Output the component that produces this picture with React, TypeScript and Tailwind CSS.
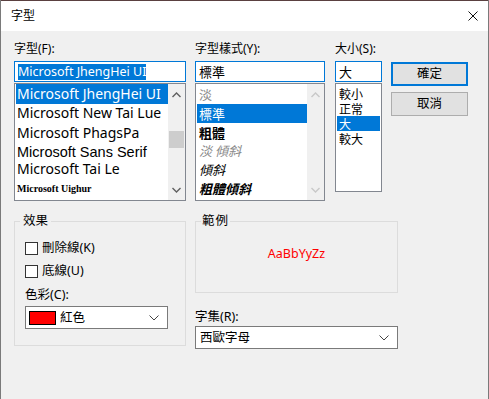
import { Fragment } from 'react';

const ui = "font-['Noto_Sans','Noto_Sans_CJK_TC',sans-serif]";

const fonts = [
  { name: 'Microsoft JhengHei UI', h: 'h-[20px]', cls: "text-[14px] font-['Noto_Sans','Noto_Sans_CJK_TC',sans-serif]", sel: true },
  { name: 'Microsoft New Tai Lue', h: 'h-[17px]', cls: "text-[14px] font-['Noto_Sans',sans-serif]" },
  { name: 'Microsoft PhagsPa', h: 'h-[23px]', cls: "text-[14px] font-['Noto_Sans',sans-serif]" },
  { name: 'Microsoft Sans Serif', h: 'h-[16px]', cls: "text-[14.5px] font-['Liberation_Sans',sans-serif]" },
  { name: 'Microsoft Tai Le', h: 'h-[18px]', cls: "text-[14px] font-['Noto_Sans',sans-serif]" },
  { name: 'Microsoft Uighur', h: 'h-[22px]', cls: "text-[10px] font-semibold font-['Liberation_Serif',serif]" },
];

const styles = [
  { name: '淡', h: 'h-[20px]', cls: 'text-[#8a8a8a]' },
  { name: '標準', h: 'h-[19px]', cls: '', sel: true },
  { name: '粗體', h: 'h-[19px]', cls: 'font-bold' },
  { name: '淡 傾斜', h: 'h-[18px]', cls: 'italic text-[#8a8a8a]' },
  { name: '傾斜', h: 'h-[19px]', cls: 'italic' },
  { name: '粗體傾斜', h: 'h-[19px]', cls: 'italic font-bold' },
];

const sizes = ['較小', '正常', '大', '較大'];

function Chevron({ up, color }: { up?: boolean; color: string }) {
  return (
    <svg width="9" height="6" viewBox="0 0 9 6">
      <path d={up ? 'M0.5 5 L4.5 1 L8.5 5' : 'M0.5 1 L4.5 5 L8.5 1'} fill="none" stroke={color} strokeWidth="1.4" />
    </svg>
  );
}

function Scrollbar({ thumb, color }: { thumb?: boolean; color: string }) {
  return (
    <div className="w-[17px] bg-[#f0f0f0] flex flex-col items-center">
      <div className="h-[18px] flex items-center justify-center mt-[2px]"><Chevron up color={color} /></div>
      {thumb ? <div className="w-[15px] h-[17px] bg-[#cdcdcd] mt-[27px]" /> : null}
      <div className="flex-1" />
      <div className="h-[18px] flex items-center justify-center mb-[1px]"><Chevron color={color} /></div>
    </div>
  );
}

function Dropdown({ children, w }: { children: React.ReactNode; w: string }) {
  return (
    <div className={`${w} h-[23px] bg-white border border-[#7a7a7a] flex items-center pr-[8px]`}>
      <div className="flex-1 flex items-center">{children}</div>
      <svg width="10" height="6" viewBox="0 0 10 6">
        <path d="M0.5 0.5 L5 5 L9.5 0.5" fill="none" stroke="#444" strokeWidth="1" />
      </svg>
    </div>
  );
}

export default function App() {
  return (
    <div className={`w-[489px] h-[399px] bg-[#f0f0f0] border-l border-r border-[#7a7a7a] text-[12px] leading-[16px] text-black ${ui}`}>
      <div className="h-[31px] bg-white flex items-center justify-between pl-[10px] pr-[10px] border-t border-[#5a4040]">
        <span className="text-[12px]">字型</span>
        <svg width="10" height="10" viewBox="0 0 10 10">
          <path d="M0.5 0.5 L9.5 9.5 M9.5 0.5 L0.5 9.5" stroke="#111" strokeWidth="1" />
        </svg>
      </div>

      <div className="pl-[13px] pt-[10px]">
        <div className="flex">
          {/* font family */}
          <div className="w-[172px]">
            <div className="h-[16px]">字型(F):</div>
            <div className="mt-[4px] h-[21px] bg-white border border-[#0078d7] flex items-center pl-[3px]">
              <span className="bg-[#0078d7] text-white text-[12.5px] leading-[16px] font-['Noto_Sans',sans-serif]">Microsoft JhengHei UI</span>
            </div>
            <div className="mt-[1px] h-[118px] bg-white border border-[#828790] flex">
              <div className="flex-1 pl-[1px] overflow-hidden">
                {fonts.map(f => (
                  <div key={f.name} className={`${f.h} flex items-center pl-[1px] whitespace-nowrap ${f.cls} ${f.sel ? 'bg-[#0078d7] text-white' : ''}`}>{f.name}</div>
                ))}
              </div>
              <Scrollbar thumb color="#606060" />
            </div>
          </div>

          {/* style */}
          <div className="w-[130px] ml-[9px]">
            <div className="h-[16px]">字型樣式(Y):</div>
            <div className="mt-[4px] h-[21px] bg-white border border-[#0078d7] flex items-center pl-[3px] text-[13px]">標準</div>
            <div className="mt-[1px] h-[118px] bg-white border border-[#828790] flex">
              <div className="flex-1 pl-[1px] text-[13px] font-['Noto_Sans_CJK_TC',sans-serif]">
                {styles.map(s => (
                  <div key={s.name} className={`${s.h} flex items-center pl-[2px] ${s.cls} ${s.sel ? 'bg-[#0078d7] text-white' : ''}`}>{s.name}</div>
                ))}
              </div>
              <Scrollbar color="#c8c8c8" />
            </div>
          </div>

          {/* size */}
          <div className="w-[47px] ml-[10px]">
            <div className="h-[16px]">大小(S):</div>
            <div className="mt-[4px] h-[21px] bg-white border border-[#0078d7] flex items-center pl-[3px] text-[13px]">大</div>
            <div className="mt-[1px] h-[109px] bg-white border border-[#828790] pt-[2px] px-[1px] text-[12px] leading-[15px] font-['Noto_Sans_CJK_TC',sans-serif]">
              {sizes.map(s => (
                <div key={s} className={`h-[15px] flex items-center pl-[2px] ${s === '大' ? 'bg-[#0078d7] text-white' : ''}`}>
                  <span className="leading-[12px]">{s}</span>
                </div>
              ))}
            </div>
          </div>

          {/* buttons */}
          <div className="ml-[9px] mt-[21px] flex flex-col gap-[6px]">
            <button className="w-[77px] h-[24px] bg-[#e1e1e1] border-2 border-[#0078d7] text-[12.5px] flex items-center justify-center">確定</button>
            <button className="w-[77px] h-[24px] bg-[#e1e1e1] border border-[#adadad] text-[12.5px] flex items-center justify-center">取消</button>
          </div>
        </div>

        <div className="flex mt-[12px]">
          <fieldset className="w-[172px] h-[133px] border border-[#dcdcdc]">
            <legend className="ml-[5px] px-[3px] text-[12.5px]">效果</legend>
            <div className="mt-[12px] pl-[10px] flex flex-col">
              {['刪除線(K)', '底線(U)'].map((t, i) => (
                <Fragment key={t}>
                  <div className={`flex items-center h-[14px] ${i ? 'mt-[9px]' : ''}`}>
                    <div className="w-[13px] h-[13px] bg-white border border-[#333]" />
                    <span className="ml-[4px] text-[12.5px]">{t}</span>
                  </div>
                </Fragment>
              ))}
              <div className="mt-[9px] h-[16px] text-[12.5px]">色彩(C):</div>
              <div className="mt-[3px]">
                <Dropdown w="w-[143px]">
                  <div className="ml-[3px] w-[27px] h-[14px] bg-[#ff0000] border border-black" />
                  <span className="ml-[4px] text-[12.5px]">紅色</span>
                </Dropdown>
              </div>
            </div>
          </fieldset>

          <div className="ml-[9px] w-[203px]">
            <fieldset className="h-[80px] border border-[#dcdcdc] flex items-center justify-center">
              <legend className="ml-[5px] px-[1px] text-[12.5px] tracking-[1px]">範例</legend>
              <span className="text-[#ff0000] text-[12.5px] font-['Noto_Sans',sans-serif] -mt-[14px]">AaBbYyZz</span>
            </fieldset>
            <div className="mt-[16px] h-[16px] text-[12.5px]">字集(R):</div>
            <div className="mt-[1px]">
              <Dropdown w="w-[203px]">
                <span className="ml-[4px] text-[12.5px]">西歐字母</span>
              </Dropdown>
            </div>
          </div>
        </div>
      </div>
    </div>
  );
}
